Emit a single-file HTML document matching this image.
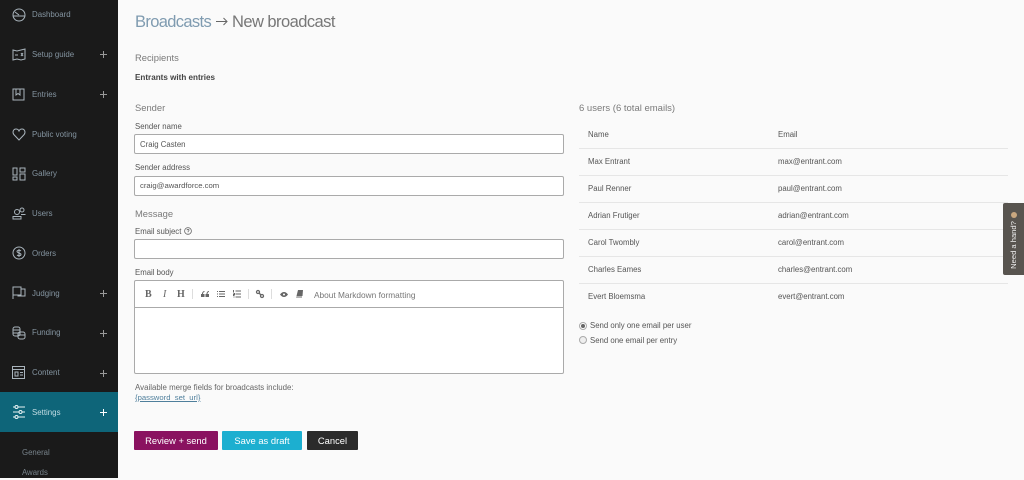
<!DOCTYPE html>
<html><head><meta charset="utf-8">
<style>
html,body{margin:0;padding:0;width:1024px;height:478px;overflow:hidden;background:#fafafa;font-family:"Liberation Sans",sans-serif;}
.t{position:absolute;white-space:nowrap;line-height:14px;height:14px;color:#555;font-size:7.800px;}
#side{position:absolute;left:0;top:0;width:118px;height:478px;background:#1a1a1a;}
.n{color:#8494a0;font-size:7.900px;left:32px;}
.p{position:absolute;left:100px;width:7px;height:7px;}
.p:before{content:"";position:absolute;left:3px;top:0;width:1px;height:7px;background:#9a9a9a;}
.p:after{content:"";position:absolute;left:0;top:3px;width:7px;height:1px;background:#9a9a9a;}
.h{font-size:9.400px;color:#7a7a7a;}
.l{color:#555;}
.i{position:absolute;left:134px;width:428px;background:#fff;border:1px solid #aaa;border-radius:2px;}
.r{position:absolute;left:579px;width:429px;height:1px;background:#e6e6e6;}
.b{position:absolute;top:431px;height:19px;line-height:19px;text-align:center;color:#fff;font-size:9.400px;border-radius:1px;}
svg{position:absolute;overflow:visible;}
.ic{fill:none;stroke:#a9b4bc;stroke-width:1;}
.tb{fill:none;stroke:#666;stroke-width:1;}
.s{position:absolute;top:289px;width:1px;height:10px;background:#ddd;}
</style></head><body>
<div id="side">
<div style="position:absolute;left:0;top:392px;width:118px;height:40px;background:#0e6579;"></div>

<svg class="ic" style="left:12px;top:8px" width="14" height="14" viewBox="0 0 14 14"><circle cx="7" cy="7" r="6"/><path d="M1 8h12M7 7L3 4"/></svg>
<div class="t n" style="top:8px">Dashboard</div>

<svg class="ic" style="left:12px;top:48px" width="14" height="13" viewBox="0 0 14 13"><path d="M1 2l4 1 4-1 4-1v10l-4 1-4-1-4 1zM3 7h3M9 5l2 3M11 5L9 8"/></svg>
<div class="t n" style="top:48px">Setup guide</div><div class="p" style="top:51px"></div>

<svg class="ic" style="left:12px;top:88px" width="13" height="13" viewBox="0 0 13 13"><path d="M1 1h11v11H1zM4 1v6l2-1.500 2 1.500V1"/></svg>
<div class="t n" style="top:88px">Entries</div><div class="p" style="top:91px"></div>

<svg class="ic" style="left:12px;top:128px" width="14" height="13" viewBox="0 0 14 13"><path d="M7 12L1.800 6.500C0 4 1.500 1 4 1c1.500 0 2.500.8 3 2 .5-1.200 1.500-2 3-2 2.500 0 4 3 2.200 5.500z"/></svg>
<div class="t n" style="top:128px">Public voting</div>

<svg class="ic" style="left:12px;top:167px" width="14" height="14" viewBox="0 0 14 14"><path d="M1 1h4v7H1zM8 1h5v4H8zM1 10h4v3H1zM8 7h5v6H8z"/></svg>
<div class="t n" style="top:167px">Gallery</div>

<svg class="ic" style="left:12px;top:207px" width="14" height="13" viewBox="0 0 14 13"><circle cx="5" cy="5" r="2.500"/><circle cx="10" cy="3" r="2"/><path d="M1 12V9.500h8V12zM9 7.500h4.500"/></svg>
<div class="t n" style="top:207px">Users</div>

<svg class="ic" style="left:12px;top:246px" width="14" height="14" viewBox="0 0 14 14"><circle cx="7" cy="7" r="6"/><path d="M9 5C8 4 5 4 5 5.500S9 7 9 8.500 6 10 5 9M7 3v8"/></svg>
<div class="t n" style="top:247px">Orders</div>

<svg class="ic" style="left:12px;top:286px" width="14" height="14" viewBox="0 0 14 14"><path d="M1 13V1h8v8H1M9 3h4v7H6v-1"/></svg>
<div class="t n" style="top:287px">Judging</div><div class="p" style="top:290px"></div>

<svg class="ic" style="left:12px;top:326px" width="14" height="14" viewBox="0 0 14 14"><rect x="1" y="1" width="7" height="9" rx="2"/><path d="M1 4h7M1 7h7"/><rect x="6" y="6" width="7" height="7" rx="2"/><path d="M6 9h7"/></svg>
<div class="t n" style="top:326px">Funding</div><div class="p" style="top:330px"></div>

<svg class="ic" style="left:12px;top:366px" width="13" height="13" viewBox="0 0 13 13"><path d="M.5.500h12v12H.5zM.5 3.500h12M3 6h3v4H3zM8 6.500h3M8 9h3"/></svg>
<div class="t n" style="top:366px">Content</div><div class="p" style="top:370px"></div>

<svg style="left:12px;top:405px;fill:none;stroke:#e8f2f4;stroke-width:1" width="14" height="14" viewBox="0 0 14 14"><path d="M1 2h2M6 2h7M1 7h6M10 7h3M1 12h2M6 12h7"/><circle cx="4.500" cy="2" r="1.500"/><circle cx="8.500" cy="7" r="1.500"/><circle cx="4.500" cy="12" r="1.500"/></svg>
<div class="t n" style="top:406px;color:#c3dde4">Settings</div>
<div class="p" style="top:409px"></div>
<div style="position:absolute;left:103px;top:409px;width:1px;height:7px;background:#fff"></div>
<div style="position:absolute;left:100px;top:412px;width:7px;height:1px;background:#fff"></div>

<div class="t" style="left:22px;top:446px;color:#77828a">General</div>
<div class="t" style="left:22px;top:466px;color:#77828a">Awards</div>
</div>

<div class="t" style="left:135px;top:10px;height:24px;line-height:24px;font-size:16.500px;letter-spacing:-.65px;color:#7f9bb0;">Broadcasts</div>
<svg style="left:216px;top:17px;fill:none;stroke:#666;stroke-width:1" width="12" height="9" viewBox="0 0 12 9"><path d="M0 4.500h11M7.500 1l3.500 3.500L7.500 8"/></svg>
<div class="t" style="left:232px;top:10px;height:24px;line-height:24px;font-size:16.500px;letter-spacing:-.55px;color:#777;">New broadcast</div>

<div class="t h" style="left:135px;top:51px">Recipients</div>
<div class="t" style="left:135px;top:71px;font-weight:bold;color:#444;font-size:8.100px">Entrants with entries</div>
<div class="t h" style="left:135px;top:101px">Sender</div>
<div class="t l" style="left:135px;top:120px">Sender name</div>
<div class="i" style="top:134px;height:18px"></div>
<div class="t" style="left:140px;top:138px;color:#555">Craig Casten</div>
<div class="t l" style="left:135px;top:161px">Sender address</div>
<div class="i" style="top:176px;height:18px"></div>
<div class="t" style="left:140px;top:179px;color:#555;font-size:7.700px">craig@awardforce.com</div>
<div class="t h" style="left:135px;top:207px">Message</div>
<div class="t l" style="left:135px;top:225px">Email subject</div>
<svg style="left:184px;top:227px;fill:none;stroke:#666;stroke-width:.8" width="8" height="8" viewBox="0 0 8 8"><circle cx="4" cy="4" r="3.400"/><path d="M3 3.200C3 2 5 2 5 3.200 5 4 4 4 4 5M4 5.800v.6"/></svg>
<div class="i" style="top:239px;height:18px"></div>
<div class="t l" style="left:135px;top:266px">Email body</div>

<div class="i" style="top:280px;height:92px"></div>
<div style="position:absolute;left:135px;top:307px;width:428px;height:1px;background:#aaa"></div>
<div class="t" style="left:145px;top:288px;font-family:'Liberation Serif',serif;font-weight:bold;font-size:10px;color:#666">B</div>
<div class="t" style="left:163px;top:288px;font-family:'Liberation Serif',serif;font-style:italic;font-size:10px;color:#666">I</div>
<div class="t" style="left:177px;top:288px;font-family:'Liberation Serif',serif;font-weight:bold;font-size:10px;color:#666">H</div>
<div class="s" style="left:192px"></div>
<svg style="left:201px;top:291px;fill:#666" width="8" height="6" viewBox="0 0 8 6"><path d="M0 3h3.500v3H0zM1 3c0-1.500 1-3 2.500-3v1C2.500 1 2 2 2 3zM4.500 3H8v3H4.500zM5.500 3C5.500 1.500 6.500 0 8 0v1C7 1 6.500 2 6.500 3z"/></svg>
<svg class="tb" style="left:217px;top:291px" width="8" height="6" viewBox="0 0 8 6"><path d="M2 .5h6M2 3h6M2 5.500h6M0 .5h1M0 3h1M0 5.500h1"/></svg>
<svg class="tb" style="left:233px;top:290px" width="8" height="8" viewBox="0 0 8 8"><path d="M2.500 1h5.500M2.500 4h5.500M2.500 7h5.500M.5 0v2.500M.5 3.500h1v1h-1v1h1M.5 7h1"/></svg>
<div class="s" style="left:248px"></div>
<svg style="left:256px;top:290px;fill:none;stroke:#666;stroke-width:1.300" width="8" height="8" viewBox="0 0 8 8"><circle cx="2" cy="2" r="1.500"/><circle cx="6" cy="6" r="1.500"/><path d="M3 3l2 2"/></svg>
<div class="s" style="left:271px"></div>
<svg style="left:280px;top:292px;fill:#666" width="8" height="5" viewBox="0 0 8 5"><path d="M0 2.500C1.500.5 2.800 0 4 0s2.500.5 4 2.500C6.500 4.500 5.200 5 4 5S1.500 4.500 0 2.500z"/><circle cx="4" cy="2.500" r="1" fill="#fff"/></svg>
<svg style="left:296px;top:290px;fill:#666" width="7" height="8" viewBox="0 0 7 8"><path d="M2 0h5l-.5 6H0.500z"/><path d="M.5 6.500h5.500v1H0z"/></svg>
<div class="t" style="left:314px;top:288px;color:#777;font-size:8.300px">About Markdown formatting</div>

<div class="t l" style="left:135px;top:381px;color:#666;font-size:7.900px">Available merge fields for broadcasts include:</div>
<div class="t" style="left:135px;top:391px;color:#4f7f9c;text-decoration:underline;font-size:7.700px">{password_set_url}</div>

<div class="b" style="left:134px;width:84px;background:#8a1260">Review + send</div>
<div class="b" style="left:222px;width:80px;background:#1cafd0">Save as draft</div>
<div class="b" style="left:307px;width:51px;background:#2b2b2b">Cancel</div>

<div class="t h" style="left:579px;top:102px;font-size:9.500px">6 users (6 total emails)</div>
<div class="t" style="left:588px;top:128px">Name</div><div class="t" style="left:778px;top:128px">Email</div>
<div class="r" style="top:148px"></div>
<div class="t" style="left:588px;top:155px">Max Entrant</div><div class="t" style="left:778px;top:155px">max@entrant.com</div>
<div class="r" style="top:175px"></div>
<div class="t" style="left:588px;top:182px">Paul Renner</div><div class="t" style="left:778px;top:182px">paul@entrant.com</div>
<div class="r" style="top:202px"></div>
<div class="t" style="left:588px;top:209px">Adrian Frutiger</div><div class="t" style="left:778px;top:209px">adrian@entrant.com</div>
<div class="r" style="top:229px"></div>
<div class="t" style="left:588px;top:236px">Carol Twombly</div><div class="t" style="left:778px;top:236px">carol@entrant.com</div>
<div class="r" style="top:256px"></div>
<div class="t" style="left:588px;top:263px">Charles Eames</div><div class="t" style="left:778px;top:263px">charles@entrant.com</div>
<div class="r" style="top:283px"></div>
<div class="t" style="left:588px;top:290px">Evert Bloemsma</div><div class="t" style="left:778px;top:290px">evert@entrant.com</div>

<svg style="left:579px;top:322px" width="8" height="8" viewBox="0 0 8 8"><circle cx="4" cy="4" r="3.500" fill="#fff" stroke="#aaa"/><circle cx="4" cy="4" r="2" fill="#666"/></svg>
<div class="t" style="left:590px;top:319px">Send only one email per user</div>
<svg style="left:579px;top:336px" width="8" height="8" viewBox="0 0 8 8"><circle cx="4" cy="4" r="3.500" fill="#eee" stroke="#aaa"/></svg>
<div class="t" style="left:590px;top:334px">Send one email per entry</div>

<div style="position:absolute;left:1003px;top:203px;width:21px;height:72px;background:#58544f;border-radius:2px 0 0 2px;"></div>
<div class="t" style="left:984px;top:238px;width:60px;text-align:center;color:#eee;font-size:7.600px;transform:rotate(-90deg);">Need a hand?</div>
<div style="position:absolute;left:1011px;top:212px;width:6px;height:6px;border-radius:3px;background:#c9a77f"></div>
</body></html>
